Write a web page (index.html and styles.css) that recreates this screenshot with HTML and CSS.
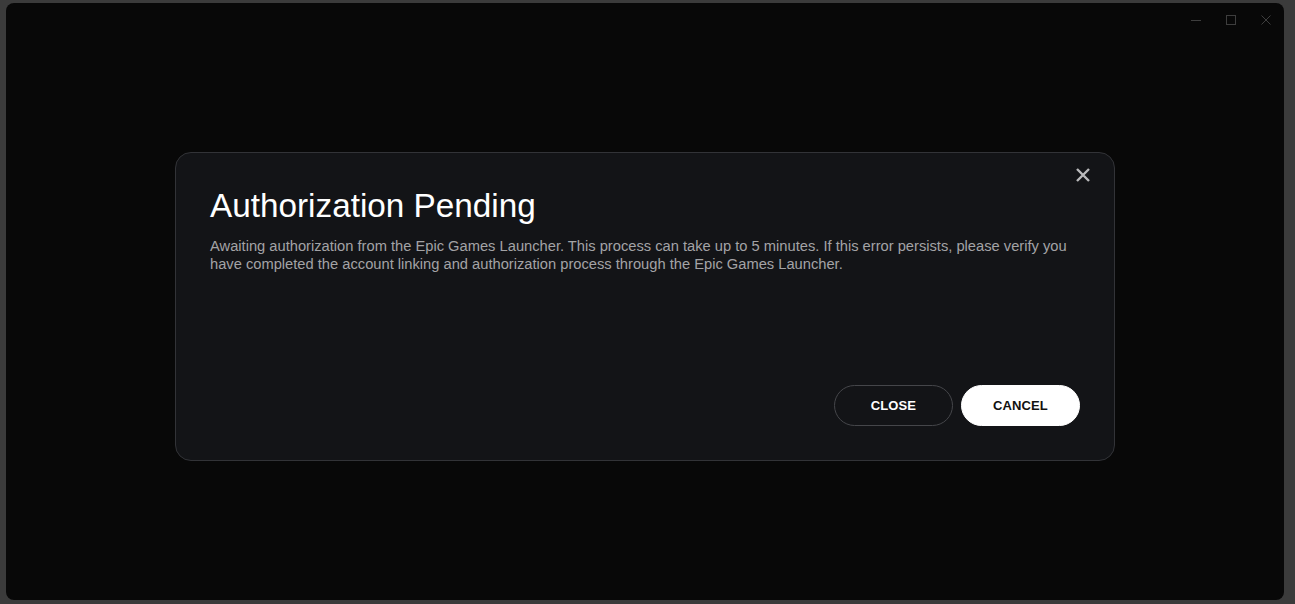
FILE: index.html
```html
<!DOCTYPE html>
<html>
<head>
<meta charset="utf-8">
<link rel="stylesheet" href="styles.css">
</head>
<body>
<div class="window">
  <div class="titlebar">
    <span class="ctl"><svg width="10" height="10" viewBox="0 0 10 10"><path d="M0 5.5h10" stroke="#3e3e3e" stroke-width="1"/></svg></span>
    <span class="ctl"><svg width="10" height="10" viewBox="0 0 10 10"><rect x="0.5" y="0.5" width="9" height="9" fill="none" stroke="#3e3e3e" stroke-width="1"/></svg></span>
    <span class="ctl"><svg width="10" height="10" viewBox="0 0 10 10"><path d="M0.5 0.5l9 9M9.5 0.5l-9 9" stroke="#3e3e3e" stroke-width="1"/></svg></span>
  </div>
  <div class="stage">
    <div class="dialog">
      <button class="x" aria-label="Close"><svg width="16" height="16" viewBox="0 0 16 16"><path d="M2 2l12 12M14 2L2 14" stroke="#b9b9bb" stroke-width="2.4" stroke-linecap="butt"/></svg></button>
      <h1 class="title">Authorization Pending</h1>
      <p class="desc">Awaiting authorization from the Epic Games Launcher. This process can take up to 5 minutes. If this error persists, please verify you have completed the account linking and authorization process through the Epic Games Launcher.</p>
      <div class="actions">
        <button class="btn btn-outline">CLOSE</button>
        <button class="btn btn-solid">CANCEL</button>
      </div>
    </div>
  </div>
</div>
</body>
</html>
```
FILE: styles.css
```css
* { box-sizing: border-box; }
html, body { margin: 0; height: 100%; }
body {
  background: #3b3b3b;
  padding: 3px 11px 4px 6px;
  font-family: "Liberation Sans", Arial, sans-serif;
  overflow: hidden;
}
.window {
  background: #080808;
  height: 597px;
  border-radius: 8px;
  display: flex;
  flex-direction: column;
}
.titlebar {
  display: flex;
  justify-content: flex-end;
  padding: 12px 1px 0 0;
  height: 34px;
}
.ctl {
  width: 35px;
  display: flex;
  justify-content: center;
  align-items: center;
  height: 10px;
}
.stage {
  flex: 1;
  display: flex;
  justify-content: center;
  align-items: flex-start;
  padding-top: 115px;
}
.dialog {
  position: relative;
  width: 940px;
  height: 309px;
  background: #131417;
  border: 1px solid #323337;
  border-radius: 16px;
  padding: 34px 34px 34px 34px;
  display: flex;
  flex-direction: column;
}
.x {
  position: absolute;
  top: 14px;
  right: 23px;
  background: none;
  border: 0;
  padding: 0;
  width: 16px;
  height: 16px;
}
.x svg { display: block; }
.title {
  margin: 0;
  font-weight: 400;
  font-size: 33.3px;
  line-height: 37px;
  color: #ffffff;
}
.desc {
  margin: 13px 0 0 0;
  font-size: 14.7px;
  line-height: 18px;
  color: #a3a3a6;
}
.actions {
  margin-top: auto;
  display: flex;
  justify-content: flex-end;
  gap: 8px;
}
.btn {
  width: 119px;
  height: 41px;
  border-radius: 21px;
  font-family: "Liberation Sans", Arial, sans-serif;
  font-weight: 700;
  font-size: 13px;
  letter-spacing: 0.1px;
  cursor: pointer;
}
.btn-outline {
  background: transparent;
  color: #ffffff;
  border: 1px solid #45464a;
}
.btn-solid {
  background: #ffffff;
  color: #111111;
  border: 1px solid #ffffff;
}
```
